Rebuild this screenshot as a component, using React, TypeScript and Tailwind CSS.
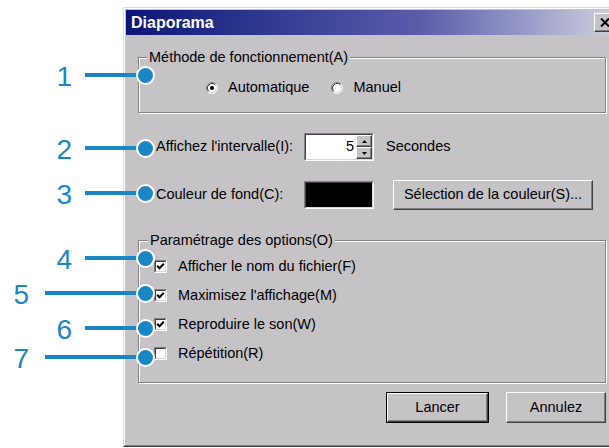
import React from "react";

const CALLOUTS: { n: string; top: string; far: boolean }[] = [
  { n: "1", top: "top-[60px]", far: false },
  { n: "2", top: "top-[133px]", far: false },
  { n: "3", top: "top-[178px]", far: false },
  { n: "4", top: "top-[243px]", far: false },
  { n: "5", top: "top-[278px]", far: true },
  { n: "6", top: "top-[313px]", far: false },
  { n: "7", top: "top-[342px]", far: true },
];

const OPTIONS: { label: string; checked: boolean }[] = [
  { label: "Afficher le nom du fichier(F)", checked: true },
  { label: "Maximisez l'affichage(M)", checked: true },
  { label: "Reproduire le son(W)", checked: true },
  { label: "Répétition(R)", checked: false },
];

function Radio({ checked }: { checked?: boolean }) {
  return (
    <svg width="12" height="12" viewBox="0 0 12 12" className="shrink-0">
      <circle cx="6" cy="6" r="5" fill="#fff" />
      <path d="M2.11 9.89 A5.5 5.5 0 0 1 9.89 2.11" fill="none" stroke="#808080" />
      <path d="M9.89 2.11 A5.5 5.5 0 0 1 2.11 9.89" fill="none" stroke="#fff" />
      <path d="M2.82 9.18 A4.5 4.5 0 0 1 9.18 2.82" fill="none" stroke="#404040" />
      <path d="M9.18 2.82 A4.5 4.5 0 0 1 2.82 9.18" fill="none" stroke="#d8d6d8" />
      {checked && <circle cx="6" cy="6" r="2" fill="#000" />}
    </svg>
  );
}

function Checkbox({ checked }: { checked?: boolean }) {
  return (
    <div className="w-[13px] h-[13px] shrink-0 border border-t-[#808080] border-l-[#808080] border-b-white border-r-white">
      <div className="w-full h-full border border-t-[#404040] border-l-[#404040] border-b-[#d8d6d8] border-r-[#d8d6d8] bg-white">
        {checked && (
          <svg width="9" height="9" viewBox="0 0 9 9">
            <path d="M1.2 3.8 L3.5 6.2 L7.8 1.8" fill="none" stroke="#000" strokeWidth="2" />
          </svg>
        )}
      </div>
    </div>
  );
}

function Raised({ className, children }: { className?: string; children?: React.ReactNode }) {
  return (
    <div
      className={`border border-t-white border-l-white border-b-[#404040] border-r-[#404040] bg-[#c6c3c7] shadow-[inset_-1px_-1px_0_#808080] flex items-center justify-center ${className ?? ""}`}
    >
      {children}
    </div>
  );
}

function Sunken({ className, children }: { className?: string; children?: React.ReactNode }) {
  return (
    <div className={`border border-t-[#808080] border-l-[#808080] border-b-white border-r-white ${className ?? ""}`}>
      <div className="w-full h-full border border-t-[#404040] border-l-[#404040] border-b-[#d8d6d8] border-r-[#d8d6d8] flex">
        {children}
      </div>
    </div>
  );
}

function Dialog() {
  return (
    <div className="w-[497px] h-[440px] shrink-0 border border-t-[#dcdadc] border-l-[#dcdadc] border-r-[#404040] border-b-[#404040] bg-[#c6c3c7]">
      <div className="h-full border border-t-white border-l-white border-r-[#808080] border-b-[#808080] p-px">
        {/* title bar */}
        <div className="h-[25px] flex items-center justify-between pl-[5px] pr-[2px] bg-linear-to-r from-[#0c1478] via-[#5c5caa] via-60% to-[#d2d2dc]">
          <span className="text-white font-bold text-[16px] leading-none">Diaporama</span>
          <Raised className="w-[21px] h-[19px]">
            <svg width="10" height="9" viewBox="0 0 10 9">
              <path d="M1 0.5 L9 8.5 M9 0.5 L1 8.5" stroke="#000" strokeWidth="2" />
            </svg>
          </Raised>
        </div>

        <div className="pl-[12px]">
          {/* Méthode de fonctionnement */}
          <fieldset className="mt-[14px] w-[468px] border border-[#858287] shadow-[inset_1px_1px_0_#fff,1px_1px_0_#fff] pb-[15px]">
            <legend className="ml-[8px] px-[2px] leading-[16px] bg-[#c6c3c7]">Méthode de fonctionnement(A)</legend>
            <div className="mt-[14px] h-[18px] flex items-center pl-[67px]">
              <Radio checked />
              <span className="ml-[10px]">Automatique</span>
              <span className="ml-[22px]">
                <Radio />
              </span>
              <span className="ml-[10px]">Manuel</span>
            </div>
          </fieldset>

          {/* intervalle */}
          <div className="mt-[20px] h-[28px] flex items-center">
            <span className="pl-[18px] w-[166px]">Affichez l'intervalle(I):</span>
            <Sunken className="w-[70px] h-[28px]">
              <div className="flex-1 bg-white flex items-center justify-end pr-[2px]">5</div>
              <div className="w-[16px] flex flex-col">
                <Raised className="flex-1">
                  <svg width="5" height="3" viewBox="0 0 5 3">
                    <path d="M2.5 0 L5 3 L0 3 Z" fill="#000" />
                  </svg>
                </Raised>
                <Raised className="flex-1">
                  <svg width="5" height="3" viewBox="0 0 5 3">
                    <path d="M0 0 L5 0 L2.5 3 Z" fill="#000" />
                  </svg>
                </Raised>
              </div>
            </Sunken>
            <span className="ml-[12px]">Secondes</span>
          </div>

          {/* couleur */}
          <div className="mt-[19px] h-[30px] flex items-center">
            <span className="pl-[18px] w-[166px]">Couleur de fond(C):</span>
            <Sunken className="w-[70px] h-[28px]">
              <div className="flex-1 bg-black" />
            </Sunken>
            <Raised className="ml-[19px] w-[200px] h-[30px]">Sélection de la couleur(S)...</Raised>
          </div>

          {/* options */}
          <fieldset className="mt-[22px] w-[468px] border border-[#858287] shadow-[inset_1px_1px_0_#fff,1px_1px_0_#fff] pb-[14px]">
            <legend className="ml-[9px] px-[2px] leading-[16px] bg-[#c6c3c7]">Paramétrage des options(O)</legend>
            <div className="mt-[4px] flex flex-col">
              {OPTIONS.map((o) => (
                <div key={o.label} className="h-[29px] flex items-center pl-[15px]">
                  <Checkbox checked={o.checked} />
                  <span className="ml-[11px]">{o.label}</span>
                </div>
              ))}
            </div>
          </fieldset>

          {/* buttons */}
          <div className="mt-[9px] w-[468px] flex justify-end gap-[17px]">
            <div className="border border-black">
              <Raised className="w-[101px] h-[29px]">Lancer</Raised>
            </div>
            <Raised className="w-[100px] h-[31px]">Annulez</Raised>
          </div>
        </div>
      </div>
    </div>
  );
}

export default function App() {
  return (
    <div className="relative w-[609px] h-[448px] overflow-hidden bg-white font-['Liberation_Sans',Arial,sans-serif] text-[14.5px] text-black">
      <div className="flex pt-[7px]">
        <div className="w-[123px] shrink-0" />
        <Dialog />
      </div>

      {CALLOUTS.map((c) => (
        <div key={c.n} className={`absolute left-0 flex h-[30px] items-center ${c.top}`}>
          <span
            className={`${c.far ? "w-[29px]" : "w-[72px]"} text-right text-[28px] leading-none translate-y-[2px] text-[#1b86c5]`}
          >
            {c.n}
          </span>
          <div className={`${c.far ? "ml-[16px] w-[101px]" : "ml-[13px] w-[61px]"} h-[4px] bg-[#1b86c5]`} />
          <div className="-ml-[10px] w-[19px] h-[19px] shrink-0 rounded-full border-2 border-white bg-[#1b86c5]" />
        </div>
      ))}
    </div>
  );
}
